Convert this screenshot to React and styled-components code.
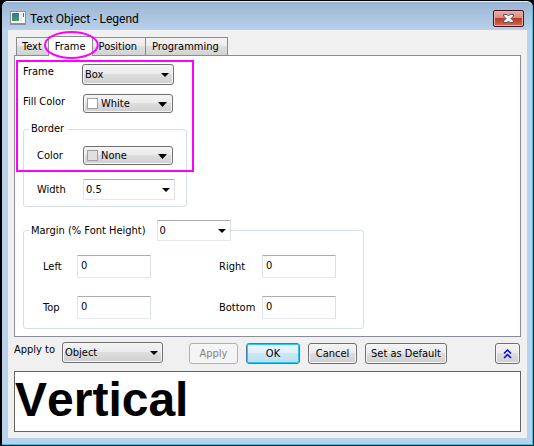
import React from "react";
import styled, { createGlobalStyle, css } from "styled-components";

const Global = createGlobalStyle`
  * { box-sizing: border-box; }
  body { margin: 0; background: #000; }
  body, button, input, select {
    font-family: "DejaVu Sans Condensed", "DejaVu Sans", sans-serif;
    font-size: 11px;
    line-height: 16px;
    color: #000;
  }
`;

const Window = styled.main`
  min-height: 100vh;
  display: flex;
  flex-direction: column;
  border: 1px solid #000;
  border-left-width: 2px;
  border-radius: 7px 7px 0 0;
  padding: 0 6px 7px;
  background: linear-gradient(#97b3d2 0, #a9c2de 14px, #b9d1ea 30px);
  box-shadow: inset 0 1px #e4f2fa, inset -1px -1px #22cdf0;
`;

const TitleBar = styled.header`
  height: 29px;
  padding: 8px 3px 0 2px;
  display: flex;
  align-items: flex-start;
  gap: 4px;
`;

const Title = styled.h1`
  flex: 1;
  margin: 0;
  font: 12px/20px Roboto, sans-serif;
`;

const AppIcon = styled.svg`
  margin-top: 2px;
  width: 16px;
  height: 14px;
`;

const CloseButton = styled.button`
  width: 31px;
  height: 17px;
  margin-top: 1px;
  padding: 0;
  display: flex;
  align-items: center;
  justify-content: center;
  border: 1px solid #481020;
  border-radius: 2px;
  background: linear-gradient(#e8aea3 0, #d98b7d 48%, #bc3a22 50%, #d06c50 100%);
  box-shadow: inset 0 0 0 1px #eab0a8;
`;

const Client = styled.div`
  flex: 1;
  padding: 6px;
  background: #f0f0f0;
`;

const Tabs = styled.div`
  display: flex;
  align-items: flex-end;
  height: 19px;
  padding-left: 2px;
`;

const Tab = styled.button`
  height: 18px;
  padding: ${(p) => (p.$joined ? "0 8px 0 6px" : "0 6px 0 5px")};
  white-space: nowrap;
  border: 1px solid #898c95;
  border-bottom: 0;
  border-left-width: ${(p) => (p.$joined ? 0 : 1)}px;
  background: linear-gradient(#f3f3f3 0, #ececec 48%, #dedede 50%, #d2d2d2 100%);
  ${(p) => p.$active && css`
    position: relative;
    height: 20px;
    margin-bottom: -1px;
    padding: 0 6px;
    background: #fff;
  `}
`;

const TabFrame = styled.span`
  position: relative;
  display: flex;
  align-items: flex-end;
`;

const Ring = styled.svg`
  position: absolute;
  z-index: 2;
  left: -5px;
  top: -5px;
  width: calc(100% + 11px);
  height: 28px;
  overflow: visible;
  pointer-events: none;
`;

const Panel = styled.section`
  border: 1px solid #898c95;
  background: #fff;
  padding: 8px 8px 7px;
`;

const Form = styled.div`
  position: relative;
  width: 164px;
`;

const Highlight = styled.div`
  position: absolute;
  z-index: 2;
  top: -4px;
  left: -7px;
  width: 178px;
  height: 112px;
  border: 2px solid #f0f;
  pointer-events: none;
`;

const Row = styled.div`
  display: flex;
  align-items: ${(p) => p.$align || "center"};
  margin-top: ${(p) => p.$gap || 0}px;
`;

const Label = styled.label`
  flex: none;
  width: ${(p) => p.$width}px;
  white-space: nowrap;
`;

const Group = styled.fieldset`
  margin: ${(p) => p.$gap}px 0 0;
  padding: 0;
  width: ${(p) => p.$width || "auto"};
  min-width: 0;
  border: 1px solid #d5dfe5;
  border-radius: 3px;
`;

const Legend = styled.legend`
  display: flex;
  align-items: center;
  gap: 11px;
  height: ${(p) => p.$height}px;
  padding: 0 ${(p) => p.$end}px 0 2px;
  margin-left: 5px;
`;

const GroupBody = styled.div`
  padding: ${(p) => p.$pad};
`;

const SelectBox = styled.span`
  position: relative;
  display: block;
  flex: none;
  width: ${(p) => p.$width}px;
`;

const SelectField = styled.select`
  appearance: none;
  display: block;
  width: 100%;
  height: ${(p) => (p.$swatch ? 19 : 21)}px;
  margin: 0;
  padding: 0 14px 0 ${(p) => (p.$swatch ? 17 : 2)}px;
  border: 1px solid #707070;
  border-radius: 3px;
  background: linear-gradient(#f3f3f3 0, #ebebeb 48%, #dddddd 50%, #cfcfcf 100%);
  box-shadow: inset 0 0 0 1px #f6f6f6;
  ${(p) => p.$editable && css`
    border-color: #abadb3 #dbdfe6 #e3e9ef #e2e3ea;
    border-radius: 1px;
    background: #fff;
    box-shadow: none;
  `}
`;

const Arrow = styled.svg`
  position: absolute;
  right: ${(p) => (p.$large ? 6 : 5)}px;
  top: ${(p) => (p.$large ? 8 : 9)}px;
  width: ${(p) => (p.$large ? 9 : 8)}px;
  height: ${(p) => (p.$large ? 5 : 4)}px;
  pointer-events: none;
`;

const Swatch = styled.span`
  position: absolute;
  left: 4px;
  top: 4px;
  width: 11px;
  height: 11px;
  border: 1px solid #a0a0a0;
  background: ${(p) => p.$color};
  pointer-events: none;
`;

const TextField = styled.input`
  width: 74px;
  height: 23px;
  padding: 0 3px 2px;
  border: 1px solid;
  border-color: #abadb3 #dbdfe6 #e3e9ef #e2e3ea;
  border-radius: 1px;
  background: #fff;
`;

const Pair = styled.div`
  display: flex;
  align-items: center;
`;

const PairGrid = styled.div`
  display: grid;
  grid-template-columns: 176px 117px;
  row-gap: 18px;
`;

const Actions = styled.div`
  display: flex;
  align-items: flex-start;
  margin-top: 5px;
`;

const Buttons = styled.div`
  flex: 1;
  display: flex;
  gap: 8px;
  margin: 1px 1px 0 26px;
`;

const Button = styled.button`
  width: ${(p) => p.$width}px;
  height: 21px;
  padding: 0;
  display: flex;
  align-items: center;
  justify-content: center;
  white-space: nowrap;
  border: 1px solid #707070;
  border-radius: 3px;
  background: linear-gradient(#f3f3f3 0, #ebebeb 48%, #dddddd 50%, #cfcfcf 100%);
  box-shadow: inset 0 0 0 1px #f6f6f6;
  ${(p) => p.$primary && css`
    border-color: #3c7fb1;
    background: linear-gradient(#eef6fb 0, #e0f0f9 48%, #cbe6f5 50%, #bcdff2 100%);
    box-shadow: inset 0 0 0 1px #25cbf5;
  `}
  ${(p) => p.$end && css`margin-left: auto;`}
  &:disabled {
    color: #838383;
    border-color: #adb2b5;
    background: #f4f4f4;
  }
`;

const Preview = styled.output`
  display: block;
  margin-top: 7px;
  height: 61px;
  border: 1px solid #646464;
  background: #fff;
  font: bold 48px/56px "Liberation Sans", Arial, sans-serif;
  font-kerning: none;
`;

function Select({ id, value, width, swatch, editable }) {
  const large = Boolean(swatch);
  return (
    <SelectBox $width={width}>
      <SelectField id={id} defaultValue={value} $swatch={large} $editable={editable}>
        <option>{value}</option>
      </SelectField>
      {swatch && <Swatch $color={swatch} />}
      <Arrow $large={large} viewBox="0 0 8 4" preserveAspectRatio="none" aria-hidden="true">
        <path d="M0 0h8L4 4z" />
      </Arrow>
    </SelectBox>
  );
}

function Measure({ id, label, width }) {
  return (
    <Pair>
      <Label htmlFor={id} $width={width}>{label}</Label>
      <TextField id={id} defaultValue="0" />
    </Pair>
  );
}

export default function App() {
  return (
    <>
      <Global />
      <Window>
        <TitleBar>
          <AppIcon viewBox="0 0 16 14" aria-hidden="true">
            <defs>
              <linearGradient id="app" x2="0" y2="1">
                <stop stopColor="#3c6fa0" />
                <stop offset="1" stopColor="#46a060" />
              </linearGradient>
            </defs>
            <path d="M0 0h16v14H0z" fill="#8a9299" />
            <path d="M1 1h14v11H1z" fill="#fff" />
            <path d="M2 2h7v8H2z" fill="url(#app)" />
            <path d="M10 2h2v8h-2z" fill="#e3e8ec" />
            <path d="M13 2h1v4h-1z" fill="#2d7a86" />
          </AppIcon>
          <Title>Text Object - Legend</Title>
          <CloseButton aria-label="Close">
            <svg width="13" height="11" viewBox="0 0 13 11" aria-hidden="true">
              <path d="M1.500 1.500h3.500l1.500 1.500 1.500-1.500h3.500v1.500L9 5.500l2.500 2.500v1.500H8L6.500 8 5 9.500H1.500V8L4 5.500 1.500 3z" fill="#f4f4f4" stroke="#535666" />
            </svg>
          </CloseButton>
        </TitleBar>
        <Client>
          <Tabs role="tablist">
            <Tab role="tab" aria-selected="false">Text</Tab>
            <TabFrame>
              <Tab role="tab" aria-selected="true" $active $joined>Frame</Tab>
              <Ring viewBox="0 0 56 28" preserveAspectRatio="none" aria-hidden="true">
                <ellipse cx="28" cy="14" rx="27" ry="13" fill="none" stroke="#f0f" strokeWidth="2" />
              </Ring>
            </TabFrame>
            <Tab role="tab" aria-selected="false" $joined>Position</Tab>
            <Tab role="tab" aria-selected="false" $joined>Programming</Tab>
          </Tabs>
          <Panel role="tabpanel">
            <Form>
              <Row $align="flex-start">
                <Label htmlFor="frame" $width={59}>Frame</Label>
                <Select id="frame" value="Box" width={92} />
              </Row>
              <Row $align="flex-start" $gap={9}>
                <Label htmlFor="fill" $width={60}>Fill Color</Label>
                <Select id="fill" value="White" width={90} swatch="#fff" />
              </Row>
              <Group $gap={9}>
                <Legend $height={14} $end={3}>Border</Legend>
                <GroupBody $pad="10px 0 6px 13px">
                  <Row>
                    <Label htmlFor="color" $width={46}>Color</Label>
                    <Select id="color" value="None" width={90} swatch="#e0e0e0" />
                  </Row>
                  <Row $gap={14}>
                    <Label htmlFor="width" $width={46}>Width</Label>
                    <Select id="width" value="0.5" width={92} editable />
                  </Row>
                </GroupBody>
              </Group>
              <Highlight />
            </Form>
            <Group $gap={13} $width="341px">
              <Legend $height={21} $end={0}>
                <label htmlFor="margin">Margin (% Font Height)</label>
                <Select id="margin" value="0" width={74} editable />
              </Legend>
              <GroupBody $pad="14px 0 9px 19px">
                <PairGrid>
                  <Measure id="left" label="Left" width={34} />
                  <Measure id="right" label="Right" width={43} />
                  <Measure id="top" label="Top" width={34} />
                  <Measure id="bottom" label="Bottom" width={43} />
                </PairGrid>
              </GroupBody>
            </Group>
          </Panel>
          <Actions>
            <Label htmlFor="apply" $width={48}>Apply to</Label>
            <Select id="apply" value="Object" width={101} />
            <Buttons>
              <Button $width={49} disabled>Apply</Button>
              <Button $width={54} $primary>OK</Button>
              <Button $width={49}>Cancel</Button>
              <Button $width={82}>Set as Default</Button>
              <Button $width={25} $end aria-label="Collapse">
                <svg width="9" height="10" viewBox="0 0 9 10" fill="none" stroke="#0000f0" strokeWidth="1.500" aria-hidden="true">
                  <path d="M1 4.500 4.500 1 8 4.500M1 9l3.500-3.500L8 9" />
                </svg>
              </Button>
            </Buttons>
          </Actions>
          <Preview>Vertical</Preview>
        </Client>
      </Window>
    </>
  );
}
